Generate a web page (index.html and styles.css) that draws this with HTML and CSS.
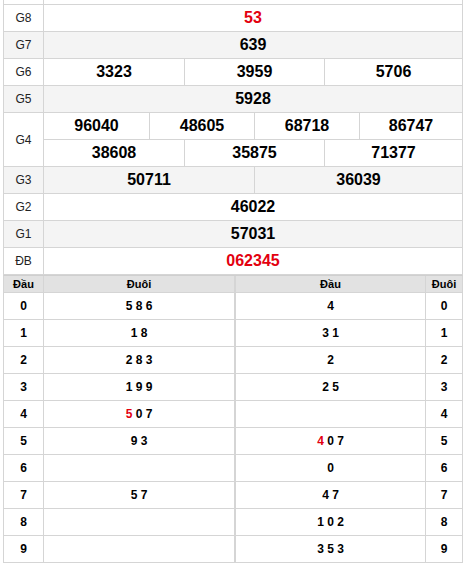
FILE: index.html
```html
<!DOCTYPE html>
<html lang="vi">
<head>
<meta charset="utf-8">
<title>Kết quả xổ số</title>
<link rel="stylesheet" href="styles.css">
</head>
<body>
<div class="page">
  <div class="kq">
    <div class="lbl spacer"></div><div class="val spacer"></div>

    <div class="lbl">G8</div>
    <div class="val"><span class="num red">53</span></div>

    <div class="lbl alt">G7</div>
    <div class="val alt"><span class="num">639</span></div>

    <div class="lbl">G6</div>
    <div class="val split c3"><span class="num">3323</span><span class="num">3959</span><span class="num">5706</span></div>

    <div class="lbl alt">G5</div>
    <div class="val alt"><span class="num">5928</span></div>

    <div class="lbl g4">G4</div>
    <div class="val split c4"><span class="num">96040</span><span class="num">48605</span><span class="num">68718</span><span class="num">86747</span></div>
    <div class="val split c3"><span class="num">38608</span><span class="num">35875</span><span class="num">71377</span></div>

    <div class="lbl alt">G3</div>
    <div class="val split c2 alt"><span class="num">50711</span><span class="num">36039</span></div>

    <div class="lbl">G2</div>
    <div class="val"><span class="num">46022</span></div>

    <div class="lbl alt">G1</div>
    <div class="val alt"><span class="num">57031</span></div>

    <div class="lbl">ĐB</div>
    <div class="val"><span class="num red">062345</span></div>
  </div>

  <div class="loto">
    <div class="hd">Đầu</div><div class="hd">Đuôi</div><div class="hd mid">Đầu</div><div class="hd">Đuôi</div>

    <div class="c">0</div><div class="c">5 8 6</div><div class="c mid">4</div><div class="c">0</div>
    <div class="c">1</div><div class="c">1 8</div><div class="c mid">3 1</div><div class="c">1</div>
    <div class="c">2</div><div class="c">2 8 3</div><div class="c mid">2</div><div class="c">2</div>
    <div class="c">3</div><div class="c">1 9 9</div><div class="c mid">2 5</div><div class="c">3</div>
    <div class="c">4</div><div class="c"><span class="red">5</span> 0 7</div><div class="c mid"></div><div class="c">4</div>
    <div class="c">5</div><div class="c">9 3</div><div class="c mid"><span class="red">4</span> 0 7</div><div class="c">5</div>
    <div class="c">6</div><div class="c"></div><div class="c mid">0</div><div class="c">6</div>
    <div class="c">7</div><div class="c">5 7</div><div class="c mid">4 7</div><div class="c">7</div>
    <div class="c">8</div><div class="c"></div><div class="c mid">1 0 2</div><div class="c">8</div>
    <div class="c">9</div><div class="c"></div><div class="c mid">3 5 3</div><div class="c">9</div>
  </div>
</div>
</body>
</html>
```

FILE: styles.css
```css
* { box-sizing: border-box; }

html, body {
  margin: 0;
  padding: 0;
  background: #fff;
}

body {
  font-family: "Liberation Sans", Arial, sans-serif;
  color: #000;
}

.page {
  width: 460px;
  margin-left: 3px;
}

/* ---------- result table ---------- */
.kq {
  display: grid;
  grid-template-columns: 39px 418px;
  gap: 1px;
  background: #d5d5d5;
  border: 1px solid #d5d5d5;
  border-top: 0;
}

.lbl,
.val {
  background: #fff;
  height: 26px;
}

.lbl {
  display: flex;
  align-items: center;
  justify-content: center;
  font-size: 12px;
  color: #222;
}

.spacer { height: 4px; }

.lbl.g4 {
  grid-row: span 2;
  height: auto;
}

.val {
  display: flex;
  align-items: center;
  justify-content: center;
}

.alt,
.alt .num { background: #f4f4f4; }

.num {
  font-size: 16px;
  font-weight: bold;
  line-height: 26px;
  text-align: center;
}

.red { color: #e3000f; }

.val.split {
  display: grid;
  gap: 1px;
  background: #d5d5d5;
}

.split .num {
  background: #fff;
  height: 26px;
}

.split.alt .num { background: #f4f4f4; }

.c4 { grid-template-columns: 105px 104px 104px 1fr; }
.c3 { grid-template-columns: 140px 139px 1fr; }
.c2 { grid-template-columns: 210px 1fr; }

/* ---------- loto table ---------- */
.loto {
  display: grid;
  grid-template-columns: 39px 190px 190px 36px;
  gap: 1px;
  background: #d5d5d5;
  border: 1px solid #d5d5d5;
  border-top: 1px solid #cfcfcf;
}

.hd {
  background: #e2e2e2;
  height: 16px;
  font-size: 11px;
  font-weight: bold;
  display: flex;
  align-items: center;
  justify-content: center;
}

.c {
  background: #fff;
  height: 26px;
  font-size: 12px;
  font-weight: bold;
  display: flex;
  align-items: center;
  justify-content: center;
  white-space: pre;
}

.mid { border-left: 1px solid #d5d5d5; }
```
